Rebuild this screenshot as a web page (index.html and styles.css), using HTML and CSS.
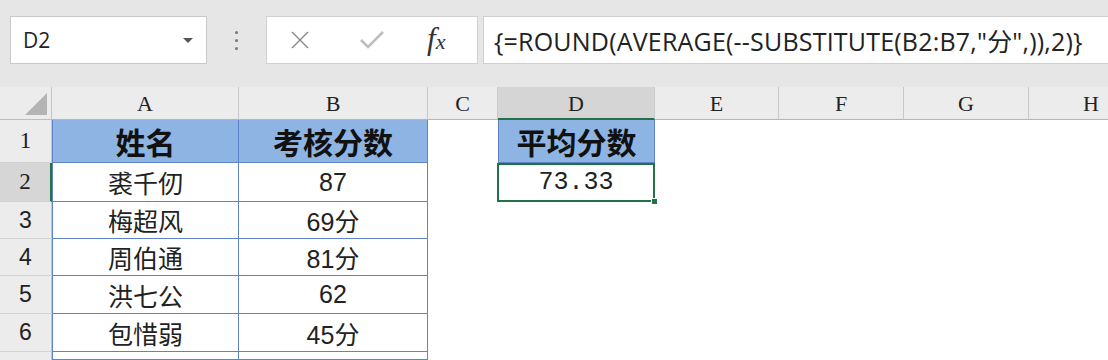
FILE: index.html
```html
<!DOCTYPE html>
<html lang="zh">
<head>
<meta charset="UTF-8" />
<title>平均分数</title>
<link rel="stylesheet" href="styles.css">
</head>
<body>

<div class="toolbar">
  <div class="name-box">
    <span>D2</span>
    <span class="drop"></span>
  </div>
  <div class="grip"><i></i><i></i><i></i></div>
  <div class="fx-box">
    <svg class="ico" width="22" height="22" viewBox="0 0 22 22">
      <path d="M3 3 L19 19 M19 3 L3 19" stroke="#8a8a8a" stroke-width="1.4" fill="none"/>
    </svg>
    <svg class="ico" width="26" height="22" viewBox="0 0 26 22">
      <path d="M2 11 L9 18 L24 3" stroke="#bdbdbd" stroke-width="2.6" fill="none"/>
    </svg>
    <span class="fx">f<small>x</small></span>
  </div>
  <div class="formula">{=ROUND(AVERAGE(--SUBSTITUTE(B2:B7,"分",)),2)}</div>
</div>

<div class="sheet">
  <div class="corner"><span></span></div>
  <div class="col">A</div>
  <div class="col">B</div>
  <div class="col">C</div>
  <div class="col sel">D</div>
  <div class="col">E</div>
  <div class="col">F</div>
  <div class="col">G</div>
  <div class="col">H</div>

  <div class="row serif">1</div>
  <div class="c t head first">姓名</div>
  <div class="c t head">考核分数</div>
  <div class="c"></div>
  <div class="c t head first">平均分数</div>
  <div class="c"></div><div class="c"></div><div class="c"></div><div class="c"></div>

  <div class="row serif sel">2</div>
  <div class="c t name first">裘千仞</div>
  <div class="c t num">87</div>
  <div class="c"></div>
  <div class="c active">73.33<span class="handle"></span></div>
  <div class="c"></div><div class="c"></div><div class="c"></div><div class="c"></div>

  <div class="row">3</div>
  <div class="c t name first">梅超风</div>
  <div class="c t num">69分</div>
  <div class="c"></div><div class="c"></div><div class="c"></div><div class="c"></div><div class="c"></div><div class="c"></div>

  <div class="row">4</div>
  <div class="c t name first">周伯通</div>
  <div class="c t num">81分</div>
  <div class="c"></div><div class="c"></div><div class="c"></div><div class="c"></div><div class="c"></div><div class="c"></div>

  <div class="row">5</div>
  <div class="c t name first">洪七公</div>
  <div class="c t num">62</div>
  <div class="c"></div><div class="c"></div><div class="c"></div><div class="c"></div><div class="c"></div><div class="c"></div>

  <div class="row">6</div>
  <div class="c t name first">包惜弱</div>
  <div class="c t num">45分</div>
  <div class="c"></div><div class="c"></div><div class="c"></div><div class="c"></div><div class="c"></div><div class="c"></div>

  <div class="row last"></div>
  <div class="c t first"></div>
  <div class="c t"></div>
  <div class="c"></div><div class="c"></div><div class="c"></div><div class="c"></div><div class="c"></div><div class="c"></div>
</div>

</body>
</html>
```

FILE: styles.css
```css
* { box-sizing: border-box; }
html, body {
  margin: 0;
  padding: 0;
  height: 360px;
  overflow: hidden;
}
body {
  background: #e6e6e6;
  font-family: "Liberation Sans", "Noto Sans CJK SC", sans-serif;
  color: #1e1e1e;
}

/* formula bar */
.toolbar {
  display: flex;
  align-items: stretch;
  height: 87px;
  padding: 16px 0 23px 10px;
}
.name-box {
  width: 197px;
  background: #fff;
  border: 1px solid #c9c9c9;
  display: flex;
  align-items: center;
  justify-content: space-between;
  padding: 0 13px 0 12px;
  font-family: "Open Sans", sans-serif;
  font-size: 21px;
  color: #222;
}
.drop {
  width: 0; height: 0;
  border-left: 5px solid transparent;
  border-right: 5px solid transparent;
  border-top: 5px solid #555;
}
.grip {
  width: 59px;
  display: flex;
  flex-direction: column;
  align-items: center;
  justify-content: center;
  gap: 5px;
}
.grip i {
  width: 3px; height: 3px;
  border-radius: 50%;
  background: #777;
}
.fx-box {
  width: 212px;
  background: #fff;
  border: 1px solid #d0d0d0;
  display: flex;
  align-items: center;
  padding-left: 22px;
}
.fx-box .ico:first-child { margin-right: 48px; }
.fx-box .ico:nth-child(2) { margin-right: 42px; }
.fx {
  font-family: "Liberation Serif", serif;
  font-style: italic;
  font-size: 31px;
  color: #333;
  line-height: 1;
  padding-bottom: 4px;
}
.fx small { font-size: 22px; }
.formula {
  flex: 1;
  margin-left: 5px;
  background: #fff;
  border: 1px solid #d0d0d0;
  border-right: none;
  display: flex;
  align-items: center;
  padding-left: 10px;
  font-family: "Open Sans", "Noto Sans CJK SC", sans-serif;
  font-size: 25px;
  letter-spacing: 0.2px;
  color: #222;
  white-space: nowrap;
}

/* grid */
.sheet {
  display: grid;
  grid-template-columns: 52px 187px 189px 70px 157px 124px 125px 125px 125px;
  grid-template-rows: 33px 43px 39px 37px 37px 38px 38px 8px;
  background: #fff;
}
.corner {
  background: #ececec;
  border-right: 1px solid #c6c6c6;
  border-bottom: 1px solid #bdbdbd;
  position: relative;
}
.corner span {
  position: absolute;
  right: 4px; bottom: 4px;
  width: 0; height: 0;
  border-left: 22px solid transparent;
  border-bottom: 22px solid #b4b4b4;
}
.col {
  background: #ececec;
  border-right: 1px solid #c9c9c9;
  border-bottom: 1px solid #b5b5b5;
  display: flex;
  align-items: center;
  justify-content: center;
  font-family: "Liberation Serif", serif;
  font-size: 22px;
  color: #222;
  padding-top: 2px;
}
.col.sel {
  background: #d5d5d5;
  border-bottom: 2px solid #217346;
}
.row {
  background: #ececec;
  border-right: 1px solid #c6c6c6;
  border-bottom: 1px solid #d2d2d2;
  display: flex;
  align-items: center;
  justify-content: center;
  font-size: 23px;
  color: #222;
}
.row.serif { font-family: "Liberation Serif", serif; }
.row.sel {
  background: #d6d6d6;
  border-right: 2px solid #217346;
}
.row.last, .last ~ .c { border-bottom: none; }
.c {
  display: flex;
  align-items: center;
  justify-content: center;
  position: relative;
}
.c.t {
  border-right: 1px solid #5d84c4;
  border-bottom: 1px solid #5d84c4;
}
.c.t.first { border-left: 1px solid #5d84c4; }
.head {
  background: #8db4e2;
  font-family: "Noto Sans CJK SC", sans-serif;
  font-weight: 700;
  font-size: 30px;
  color: #111;
}
.name {
  font-family: "Noto Sans CJK SC", sans-serif;
  font-size: 25px;
  color: #222;
}
.num {
  font-family: "Liberation Sans", "Noto Sans CJK SC", sans-serif;
  font-size: 25px;
  color: #222;
}
.active {
  border: 2px solid #217346;
  margin-left: -1px;
  font-family: "Liberation Mono", monospace;
  font-size: 25px;
  color: #222;
}
.handle {
  position: absolute;
  right: -5px; bottom: -5px;
  width: 7px; height: 7px;
  background: #217346;
  border: 1px solid #fff;
}
```
